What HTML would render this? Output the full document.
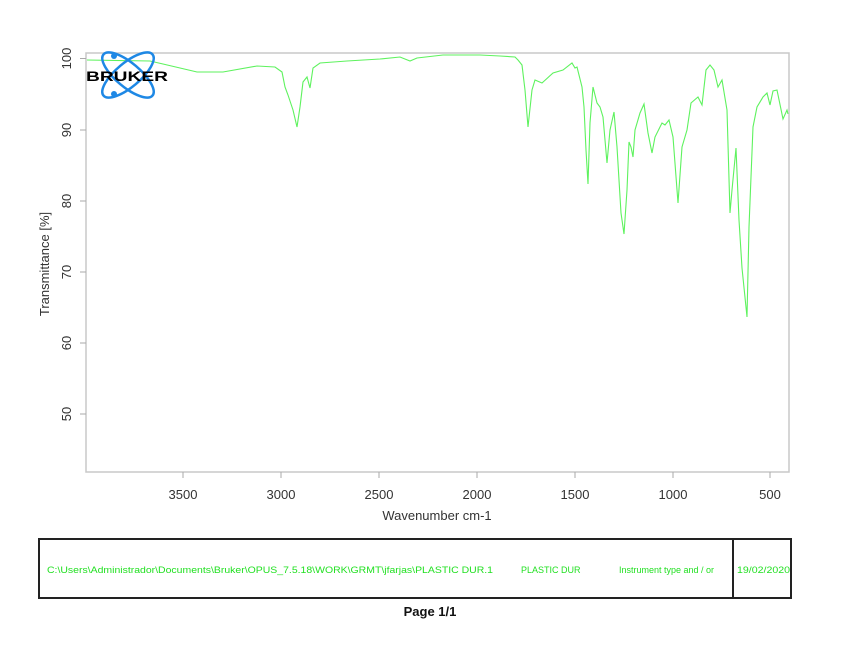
<!DOCTYPE html>
<html><head><meta charset="utf-8"><style>
html,body{margin:0;padding:0;background:#fff;}
body{width:848px;height:655px;overflow:hidden;position:relative;font-family:"Liberation Sans",sans-serif;}
</style></head><body>
<svg width="848" height="655" style="position:absolute;left:0;top:0" font-family="Liberation Sans, sans-serif">
<rect x="86" y="53" width="703" height="419" fill="none" stroke="#c8c8c8" stroke-width="1.5"/>
<g stroke="#aaa" stroke-width="1">
<line x1="80" y1="58.5" x2="86" y2="58.5"/><line x1="80" y1="130" x2="86" y2="130"/><line x1="80" y1="201" x2="86" y2="201"/><line x1="80" y1="272" x2="86" y2="272"/><line x1="80" y1="343" x2="86" y2="343"/><line x1="80" y1="414" x2="86" y2="414"/>
<line x1="183" y1="472" x2="183" y2="478"/><line x1="281" y1="472" x2="281" y2="478"/><line x1="379" y1="472" x2="379" y2="478"/><line x1="477" y1="472" x2="477" y2="478"/><line x1="575" y1="472" x2="575" y2="478"/><line x1="673" y1="472" x2="673" y2="478"/><line x1="770" y1="472" x2="770" y2="478"/>
</g>
<g font-size="13" fill="#333" text-anchor="middle">
<text transform="translate(71,58.5) rotate(-90)" dy="0">100</text>
<text transform="translate(71,130) rotate(-90)">90</text>
<text transform="translate(71,201) rotate(-90)">80</text>
<text transform="translate(71,272) rotate(-90)">70</text>
<text transform="translate(71,343) rotate(-90)">60</text>
<text transform="translate(71,414) rotate(-90)">50</text>
<text x="183" y="499">3500</text><text x="281" y="499">3000</text><text x="379" y="499">2500</text><text x="477" y="499">2000</text><text x="575" y="499">1500</text><text x="673" y="499">1000</text><text x="770" y="499">500</text>
<text x="437" y="520">Wavenumber cm-1</text>
<text transform="translate(49,264) rotate(-90)">Transmittance [%]</text>
</g>
<polyline fill="none" stroke="#5ef25e" stroke-width="1.1" points="87,60 150,61 163,64 197,72 223,72 257,66 275,67 282,72 285,87 288,95 293,110 297,127 300,107 303,82 307,77 310,88 313,68 320,63 347,61 380,59 400,57 410,61 417,58 443,55 480,55 500,56 515,57 518,60 522,65 525,90 528,127 532,90 535,80 542,83 553,73 563,70 572,63 575,68 577,67 582,87 584,107 586,150 588,184 590,123 593,87 597,103 600,107 603,117 607,163 610,130 614,112 617,147 621,213 624,234 627,190 629,142 631,147 633,157 635,130 640,113 644,104 648,133 652,153 655,137 662,123 665,125 669,120 673,137 678,203 682,147 687,130 691,103 698,97 702,105 706,70 710,65 714,70 718,87 722,80 727,110 730,213 732,190 736,148 739,220 742,268 747,317 749,227 753,127 757,107 763,97 767,93 770,105 773,91 777,90 783,119 787,110 788,114"/>
<g fill="none" stroke="#1e88e5" stroke-width="2.5">
<ellipse cx="128" cy="75" rx="32" ry="12" transform="rotate(40 128 75)"/>
<ellipse cx="128" cy="75" rx="32" ry="12" transform="rotate(-40 128 75)"/>
</g>
<circle cx="114" cy="56" r="3" fill="#1e88e5"/><circle cx="114" cy="94" r="3" fill="#1e88e5"/>
<text x="86" y="81" font-size="14" font-weight="bold" fill="#000" textLength="82" lengthAdjust="spacingAndGlyphs">BRUKER</text>
<rect x="39" y="539" width="752" height="59" fill="none" stroke="#222" stroke-width="2"/>
<line x1="733" y1="539" x2="733" y2="598" stroke="#222" stroke-width="2"/>
<g font-size="9" fill="#22e022">
<text x="47" y="573" textLength="446" lengthAdjust="spacingAndGlyphs">C:\Users\Administrador\Documents\Bruker\OPUS_7.5.18\WORK\GRMT\jfarjas\PLASTIC DUR.1</text>
<text x="521" y="573">PLASTIC DUR</text>
<text x="619" y="573">Instrument type and / or</text>
<text x="737" y="573" textLength="53" lengthAdjust="spacingAndGlyphs">19/02/2020</text>
</g>
<text x="430" y="616" font-size="13" font-weight="bold" fill="#111" text-anchor="middle">Page 1/1</text>
</svg>
</body></html>
